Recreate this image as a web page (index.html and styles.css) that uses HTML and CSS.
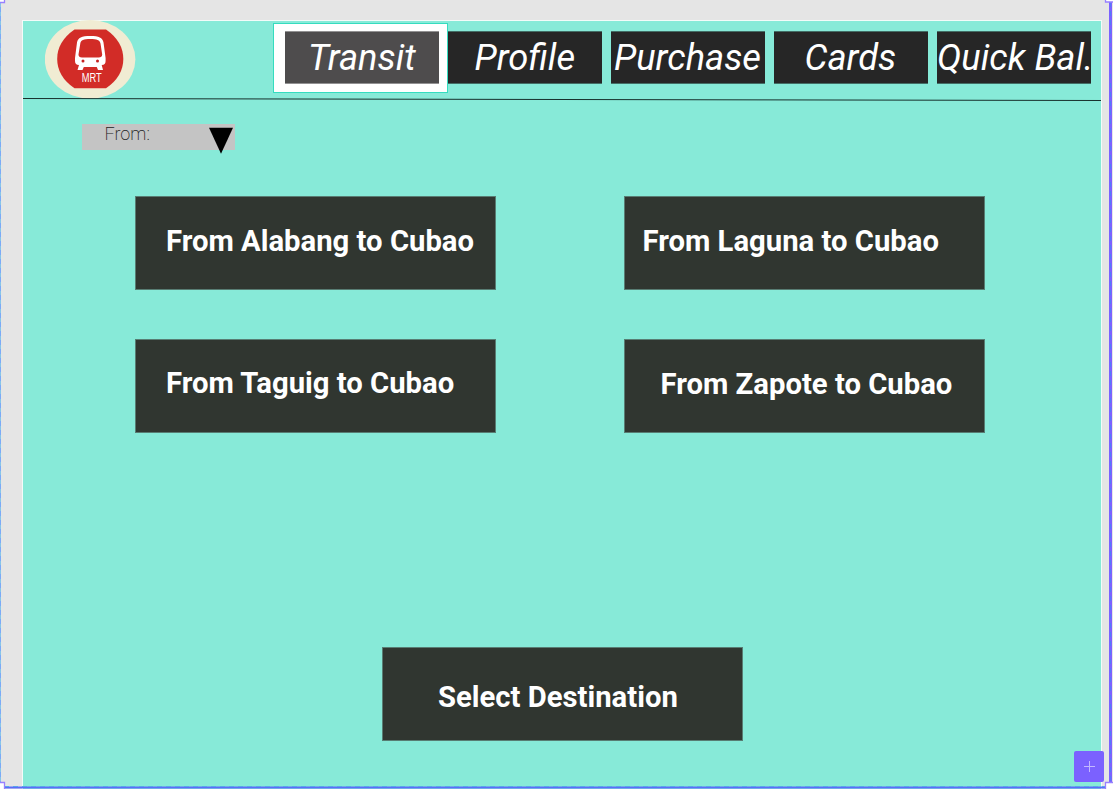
FILE: index.html
```html
<!DOCTYPE html>
<html lang="en">
<head>
<meta charset="utf-8">
<title>MRT Transit</title>
<link rel="stylesheet" href="styles.css">
</head>
<body>
<div class="canvas">
  <main class="board">
    <header class="header">
      <svg class="logo" width="91" height="79" viewBox="0 0 91 79" role="img" aria-label="MRT">
        <ellipse cx="45.100" cy="39.300" rx="45.300" ry="39.300" fill="#f0ecd3"/>
        <path d="M29.500 9.500H61Q78.300 21.500 78.300 39T61 68.300H29.500Q12.200 56.500 12.200 39T29.500 9.500Z" fill="#d22c27"/>
        <path fill-rule="evenodd" fill="#fff" d="M45.300 16C54 16 57.500 17.500 58.500 22.500L60.600 38V41Q60.600 45 56.700 45L58 50H53L51.800 47H38.800L37.500 50H32.500L34 45Q30 45 30 41V38L32 22.500C33 17.500 36.500 16 45.300 16ZM45.300 19C38.500 19 36 20 35.300 23.500L33.500 34.500Q33.500 37.500 37 37.500H53.600Q57.200 37.500 57.200 34.500L55.500 23.500C54.700 20 52 19 45.300 19Z"/>
        <circle cx="38" cy="41" r="1.500" fill="#c6201f"/>
        <circle cx="52.500" cy="41" r="1.500" fill="#c6201f"/>
        <text class="logo-text" x="36.800" y="61.600" textLength="20" lengthAdjust="spacingAndGlyphs">MRT</text>
      </svg>
      <nav class="nav">
        <a class="tab tab-active"><span class="tab-face transit">Transit</span></a>
        <a class="tab"><span class="tab-face profile">Profile</span></a>
        <a class="tab"><span class="tab-face purchase">Purchase</span></a>
        <a class="tab"><span class="tab-face cards">Cards</span></a>
        <a class="tab"><span class="tab-face balance">Quick Bal.</span></a>
      </nav>
    </header>
    <svg class="divider" width="1078" height="3" viewBox="0 0 1078 3"><path d="M0 .5L1078 2.500" stroke="#17302c" stroke-width="1"/></svg>
    <div class="select">
      <span class="select-label">From:</span>
      <svg class="arrow" width="24" height="27" viewBox="0 0 24 27"><path d="M0 .7H24L12 26.700Z"/></svg>
    </div>
    <section class="routes">
      <button class="card alabang">From Alabang to Cubao</button>
      <button class="card laguna">From Laguna to Cubao</button>
      <button class="card taguig">From Taguig to Cubao</button>
      <button class="card zapote">From Zapote to Cubao</button>
    </section>
    <button class="card destination">Select Destination</button>
  </main>
  <svg class="selection" width="1113" height="789" viewBox="0 0 1113 789" fill="none">
    <path d="M.5 3V783" stroke="#7baaf7"/>
    <path d="M.5 3V783" stroke="#86c5e8" stroke-dasharray="4 5"/>
    <path d="M1110.500 2V783" stroke="#7b61ff" stroke-width="3"/>
    <path d="M1110.500 2V783" stroke="#527ef5" stroke-dasharray="5 4"/>
    <path d="M4 787.500H1106" stroke="#5b6cfa" stroke-width="2"/>
    <path d="M4 786.500H1106" stroke="#58a6e8" stroke-dasharray="5 4"/>
    <path d="M-1 -1H4.500V2.500H-1ZM1105.500 -1H1114V2H1105.500ZM-1 782.500H4.500V790H-1ZM1105.500 782.500H1114V790H1105.500Z" fill="#fff" stroke="#9880ff" stroke-width="1.300"/>
  </svg>
  <button class="add" aria-label="Add"><svg width="11" height="11" viewBox="0 0 11 11"><path d="M5.500 0V11M0 5.500H11" stroke="#c3b8ff"/></svg></button>
</div>
</body>
</html>
```
FILE: styles.css
```css
* { box-sizing: border-box; }
body { margin: 0; }
button { border: 0; margin: 0; padding: 0; }
.canvas {
  position: relative;
  width: 1113px;
  height: 789px;
  padding: 20px 0 0 22px;
  overflow: hidden;
  background: #e5e5e5;
  font-family: Roboto, "Liberation Sans", sans-serif;
}
.board {
  width: 1080px;
  height: 769px;
  border: 1px solid #f3fbf9;
  border-bottom: 0;
  background: #87ead8;
}
.header { display: flex; height: 77px; }
.logo { flex: none; margin-left: 22px; margin-top: -1px; }
.logo-text { font: 12.500px "Liberation Sans", Arial, sans-serif; fill: #fff; }
.nav { display: flex; padding: 2px 0 0 137px; }
.tab { width: 154px; margin-right: 9px; padding-top: 8px; }
.tab-active {
  width: 175px;
  height: 70px;
  margin-right: 0;
  padding: 7px 8px 0 11px;
  background: #fff;
  border: 1px solid #35dcbf;
}
.tab-face {
  display: block;
  width: 154px;
  height: 53px;
  border: solid #436e66;
  border-width: 1px 0;
  background: #262626;
  color: #fff;
  font-size: 36.300px;
  font-style: italic;
  font-weight: 400;
  line-height: 52px;
  white-space: nowrap;
}
.tab-active .tab-face { background: #4e4c4d; border-color: #929192; }
.transit { padding-left: 23px; }
.profile { padding-left: 26.500px; }
.purchase { padding-left: 3px; }
.cards { padding-left: 30.500px; }
.balance { padding-left: 0; }
.divider { display: block; }
.select {
  display: flex;
  justify-content: space-between;
  width: 152.500px;
  height: 26px;
  margin: 23px 0 0 59px;
  padding: 0 2px 0 22.500px;
  background: #c4c4c4;
  color: #222;
  font-size: 18px;
  font-weight: 200;
}
.select-label { line-height: 19px; }
.arrow { flex: none; margin-top: 3px; }
.routes {
  display: grid;
  grid-template-columns: 361px 361px;
  gap: 49px 128px;
  margin: 46px 0 0 112px;
}
.card {
  display: block;
  width: 361px;
  height: 94px;
  border: 1px solid #587d73;
  background: #303630;
  color: #fff;
  font: 700 29.250px/34px Roboto, "Liberation Sans", sans-serif;
  text-align: left;
  white-space: nowrap;
}
.alabang { padding: 0 0 4px 30px; }
.laguna { padding: 0 0 4px 17.500px; }
.taguig { padding: 0 0 6px 30px; }
.zapote { padding: 0 0 4px 35.500px; }
.destination { margin: 214px 0 0 359px; padding: 5px 0 0 55px; }
.selection { position: absolute; inset: 0; pointer-events: none; }
.add {
  position: absolute;
  left: 1074px;
  top: 751px;
  display: grid;
  place-items: center;
  width: 30px;
  height: 31px;
  border-radius: 2px;
  background: #7b61ff;
}
```
